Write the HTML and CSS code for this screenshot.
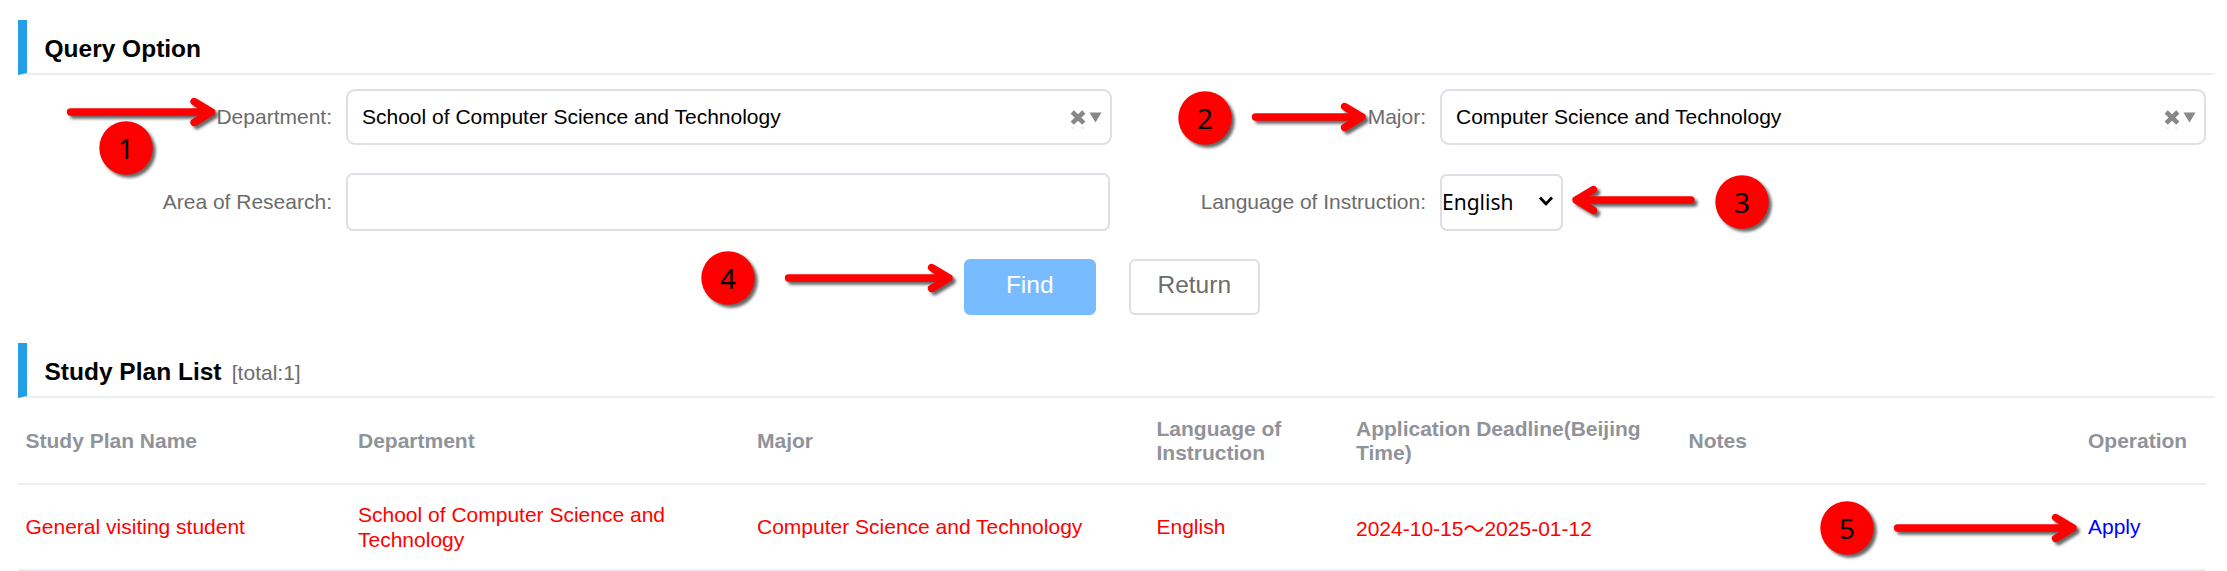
FILE: index.html
```html
<!DOCTYPE html>
<html lang="en">
<head>
<meta charset="utf-8">
<title>Study Plan Query</title>
<link rel="stylesheet" href="styles.css">
</head>
<body>
<main class="page">
  <section class="query">
    <h2 class="section-title">Query Option</h2>
    <form class="form">
      <div class="field">
        <span class="label">Department:</span>
        <div class="combo">
          <span>School of Computer Science and Technology</span>
          <svg class="combo-icons" width="34" height="24" viewBox="0 0 34 24"><path class="cross" d="M4.200 7L15.800 18.200M15.800 7L4.200 18.200"/><path class="caret" d="M21.500 7.500h12L27.500 17.500z"/><path class="speck" d="M3.500 23h3M13 23h3"/></svg>
        </div>
      </div>
      <div class="field">
        <span class="label">Major:</span>
        <div class="combo">
          <span>Computer Science and Technology</span>
          <svg class="combo-icons" width="34" height="24" viewBox="0 0 34 24"><path class="cross" d="M4.200 7L15.800 18.200M15.800 7L4.200 18.200"/><path class="caret" d="M21.500 7.500h12L27.500 17.500z"/><path class="speck" d="M3.500 23h3M13 23h3"/></svg>
        </div>
      </div>
      <div class="field">
        <span class="label">Area of Research:</span>
        <div class="input"></div>
      </div>
      <div class="field">
        <span class="label">Language of Instruction:</span>
        <div class="dropdown">
          <span>English</span>
          <svg width="16" height="12" viewBox="0 0 16 12"><path class="chevron" d="M2 1.500L8 8L14 1.500"/></svg>
        </div>
      </div>
    </form>
    <div class="actions">
      <div class="btn btn-primary">Find</div>
      <div class="btn">Return</div>
    </div>
  </section>
  <section class="plans">
    <h2 class="section-title">Study Plan List <span class="total">[total:1]</span></h2>
    <div class="table">
      <div class="row head">
        <div>Study Plan Name</div><div>Department</div><div>Major</div><div>Language of Instruction</div><div>Application Deadline(Beijing Time)</div><div>Notes</div><div>Operation</div>
      </div>
      <div class="row body">
        <div>General visiting student</div><div>School of Computer Science and Technology</div><div>Computer Science and Technology</div><div>English</div><div class="date">2024-10-15～2025-01-12</div><div></div><div><a class="apply">Apply</a></div>
      </div>
    </div>
  </section>
  <svg class="marks" width="2227" height="571" viewBox="0 0 2227 571">
    <g class="arrows">
      <path d="M70.500 112H211.500M194 101.500L211.500 112L194 122.500"/>
      <path d="M1255.500 117H1362M1344.500 106.500L1362 117L1344.500 127.500"/>
      <path d="M1691 200H1576M1593.500 189.500L1576 200L1593.500 210.500"/>
      <path d="M788.500 278H949M931.500 267.500L949 278L931.500 288.500"/>
      <path d="M1897.500 528H2073M2055.500 517.500L2073 528L2055.500 538.500"/>
    </g>
    <g class="heads">
      <path d="M199 106L211.500 112L199 118z"/>
      <path d="M1349.500 111L1362 117L1349.500 123z"/>
      <path d="M1588.500 194L1576 200L1588.500 206z"/>
      <path d="M936.500 272L949 278L936.500 284z"/>
      <path d="M2060.500 522L2073 528L2060.500 534z"/>
    </g>
    <g class="dots">
      <circle cx="126" cy="148" r="26.700"/>
      <circle cx="1205" cy="118" r="26.700"/>
      <circle cx="1742" cy="202" r="26.700"/>
      <circle cx="728" cy="278" r="26.700"/>
      <circle cx="1847" cy="528" r="26.700"/>
    </g>
    <g class="nums">
      <text x="126" y="159">1</text>
      <text x="1205" y="129">2</text>
      <text x="1742" y="213">3</text>
      <text x="728" y="289">4</text>
      <text x="1847" y="538.500">5</text>
    </g>
  </svg>
</main>
</body>
</html>
```
FILE: styles.css
```css
* { box-sizing: border-box; }

body {
  margin: 0;
  background: #fff;
  font-family: "Liberation Sans", Arial, sans-serif;
  font-size: 21px;
  color: #6c6c6c;
}

.page {
  position: relative;
  height: 571px;
  padding: 20px 12px 0 18px;
  overflow: hidden;
}

.section-title {
  margin: 0;
  height: 54.500px;
  padding: 0 0 0 17.500px;
  border-left: 9px solid #259ee8;
  border-bottom: 2px solid #ebeef5;
  font-size: 24.500px;
  line-height: 57px;
  color: #000;
}

.total {
  margin-left: 3.500px;
  font-size: 21px;
  font-weight: 400;
  color: #6c6c6c;
}

.form {
  display: grid;
  grid-template-columns: 1094px 1093px;
  grid-template-rows: 56px 58px;
  row-gap: 28.500px;
  padding-top: 14px;
}

.field {
  display: grid;
  grid-template-columns: 314px 766px;
  column-gap: 14px;
  align-items: center;
}

.label { text-align: right; }

.combo {
  display: flex;
  align-items: center;
  justify-content: space-between;
  height: 56px;
  padding: 0 8px 0 14px;
  border: 2px solid #dcdfe6;
  border-radius: 9px;
  color: #000;
}

.cross { fill: none; stroke: #888; stroke-width: 4.600; }
.caret { fill: #888; }
.speck { fill: none; stroke: #ddd; }

.input {
  width: 764px;
  height: 58px;
  border: 2px solid #dcdfe6;
  border-radius: 7px;
}

.dropdown {
  display: flex;
  align-items: center;
  justify-content: space-between;
  width: 122.500px;
  height: 57px;
  border: 2px solid #dcdfe6;
  padding: 0 7px 0 0;
  border-radius: 7px;
  font-family: "Noto Sans", sans-serif;
  color: #000;
}

.chevron { fill: none; stroke: #000; stroke-width: 2.800; }

.actions {
  display: flex;
  gap: 33px;
  padding: 27.500px 0 0 946px;
}

.btn {
  width: 131.500px;
  height: 56px;
  border: 2px solid #dcdfe6;
  border-radius: 6px;
  text-align: center;
  font-size: 24.500px;
  line-height: 48px;
}

.btn-primary {
  border-color: #79bbff;
  background: #79bbff;
  color: #fff;
}

.plans { margin-top: 28px; }

.plans .section-title { height: 55px; }

.table { width: 2188px; }

.row {
  display: grid;
  grid-template-columns: 332.500px 399px 399.500px 199.500px 332.500px 399.500px 125.500px;
  align-items: center;
  height: 86px;
  border-bottom: 2px solid #ebeef5;
  line-height: 24.500px;
}

.row > div { padding: 2px 7.500px 0; }

.head {
  height: 87px;
  font-weight: 700;
  color: #909399;
}

.body { color: #f00; }
.body .date { padding-top: 6px; font-family: "Liberation Sans", "Noto Sans CJK SC", sans-serif; }
.apply { color: #00f; }

.marks {
  position: absolute;
  left: 0;
  top: 0;
}

.arrows, .dots { filter: drop-shadow(3px 3px 1.500px rgba(0, 0, 0, 0.600)); }
.arrows path {
  fill: none;
  stroke: #f00;
  stroke-width: 7.300;
  stroke-linecap: round;
  stroke-linejoin: round;
}
.heads, .dots { fill: #f00; }
.nums {
  fill: #000;
  font-family: "Noto Sans", sans-serif;
  font-size: 28px;
  text-anchor: middle;
}
```
